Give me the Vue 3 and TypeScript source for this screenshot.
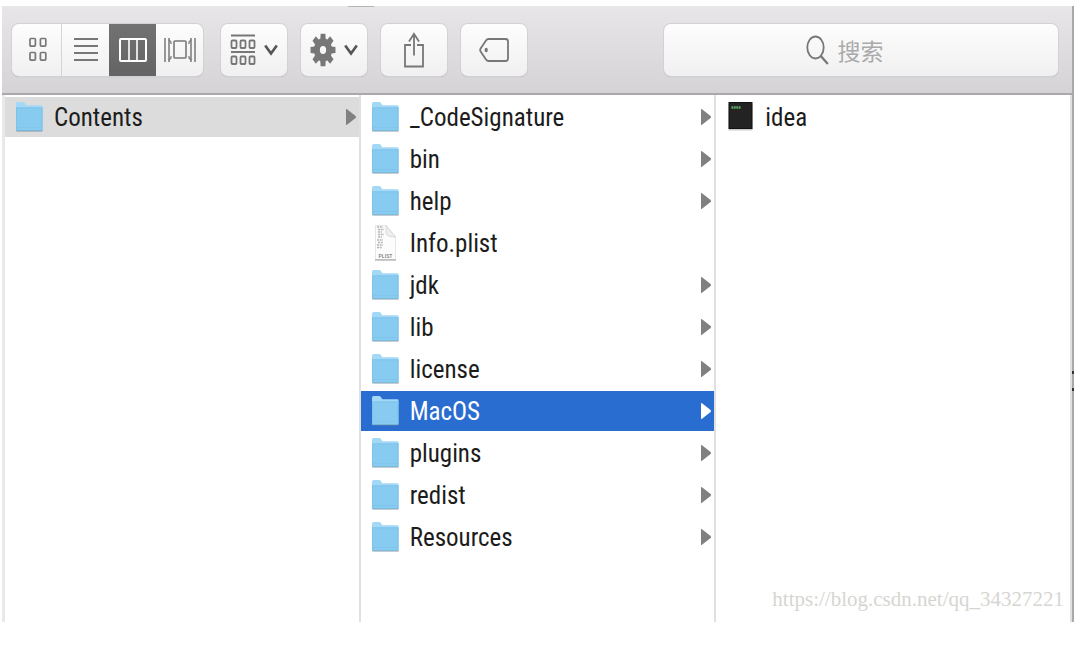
<script setup lang="ts">
import { ref } from 'vue'

type Kind = 'folder' | 'plist' | 'exec'

interface Entry {
  name: string
  kind: Kind
}

interface Column {
  label: string
  entries: Entry[]
  picked?: string
  active?: boolean
}

const folder = (name: string): Entry => ({ name, kind: 'folder' })

const columns = ref<Column[]>([
  { label: 'Application', entries: [folder('Contents')], picked: 'Contents' },
  {
    label: 'Contents',
    picked: 'MacOS',
    active: true,
    entries: [
      folder('_CodeSignature'),
      folder('bin'),
      folder('help'),
      { name: 'Info.plist', kind: 'plist' },
      folder('jdk'),
      folder('lib'),
      folder('license'),
      folder('MacOS'),
      folder('plugins'),
      folder('redist'),
      folder('Resources'),
    ],
  },
  { label: 'MacOS', entries: [{ name: 'idea', kind: 'exec' }] },
])

const query = ref('')
const teeth = [0, 45, 90, 135, 180, 225, 270, 315]
</script>

<template>
  <div class="page">
    <main class="window">
      <header class="toolbar">
        <div class="segments" role="group" aria-label="View">
          <button type="button" class="segment" aria-label="Icons">
            <svg width="18" height="26" viewBox="0 0 18 26" fill="none" stroke="#777" stroke-width="1.7">
              <rect x="1" y="1.5" width="5.4" height="7.6" rx="1" />
              <rect x="11.4" y="1.5" width="5.4" height="7.6" rx="1" />
              <rect x="1" y="15.5" width="5.4" height="7.6" rx="1" />
              <rect x="11.4" y="15.5" width="5.4" height="7.6" rx="1" />
            </svg>
          </button>
          <button type="button" class="segment" aria-label="List">
            <svg width="26" height="26" viewBox="0 0 26 26" stroke="#777" stroke-width="2">
              <path d="M1 2H25M1 9H25M1 16H25M1 23H25" />
            </svg>
          </button>
          <button type="button" class="segment on" aria-label="Columns" aria-pressed="true">
            <svg width="28" height="24" viewBox="0 0 28 24" fill="none" stroke="#fff" stroke-width="2">
              <rect x="1" y="1" width="26" height="22" rx="1" />
              <path d="M10 1V23M18 1V23" stroke-width="1.6" />
            </svg>
          </button>
          <button type="button" class="segment" aria-label="Cover Flow">
            <svg width="32" height="26" viewBox="0 0 32 26" fill="none" stroke="#777" stroke-width="1.6">
              <rect x="10" y="4" width="12" height="17" rx="1" />
              <path d="M1 1V25M31 1V25M5 1V25M27 1V25" stroke-width="1.5" />
              <path d="M5 3L7 5V7M7 19V21L5 23M27 3L25 5V7M25 19V21L27 23" stroke-width="1.2" />
            </svg>
          </button>
        </div>

        <button type="button" class="tool" aria-label="Arrange">
          <svg width="26" height="32" viewBox="0 0 26 32" fill="none" stroke="#777" stroke-width="1.8">
            <path d="M1 1.5H25M1 18H25" stroke-width="2" />
            <rect x="1.5" y="6.5" width="5" height="7.5" rx="1" />
            <rect x="10.5" y="6.5" width="5" height="7.5" rx="1" />
            <rect x="19.5" y="6.5" width="5" height="7.5" rx="1" />
            <rect x="1.5" y="22.5" width="5" height="7.5" rx="1" />
            <rect x="10.5" y="22.5" width="5" height="7.5" rx="1" />
            <rect x="19.5" y="22.5" width="5" height="7.5" rx="1" />
          </svg>
          <svg width="14" height="12" viewBox="0 0 14 12" fill="none" stroke="#555" stroke-width="2.6">
            <path d="M1.2 1.5L7 9.5L12.8 1.5" />
          </svg>
        </button>

        <button type="button" class="tool" aria-label="Actions">
          <svg width="26" height="34" viewBox="-12 -12 24 24" preserveAspectRatio="none">
            <path v-for="a in teeth" :key="a" d="M-2.2 -11.5H2.2L2.6 -6H-2.6Z" fill="#777" :transform="`rotate(${a})`" />
            <circle r="5.6" fill="none" stroke="#777" stroke-width="5.4" />
          </svg>
          <svg width="14" height="12" viewBox="0 0 14 12" fill="none" stroke="#555" stroke-width="2.6">
            <path d="M1.2 1.5L7 9.5L12.8 1.5" />
          </svg>
        </button>

        <button type="button" class="tool" aria-label="Share">
          <svg width="22" height="36" viewBox="0 0 22 36" fill="none" stroke="#777" stroke-width="1.8">
            <path d="M8 13H2V34.5H20V13H14" />
            <path d="M11 23.5V2M6 9.5L11 1.8L16 9.5" />
          </svg>
        </button>

        <button type="button" class="tool" aria-label="Tags">
          <svg width="30" height="24" viewBox="0 0 30 24" fill="none" stroke="#777" stroke-width="1.8">
            <path d="M9.5 1H26.5Q29 1 29 3.5V20.5Q29 23 26.5 23H9.5Q8 23 7 21.5L1.6 13.5Q.8 12 1.6 10.5L7 2.5Q8 1 9.5 1Z" />
            <ellipse cx="7.2" cy="12" rx="1.6" ry="2.2" fill="#777" stroke="none" />
          </svg>
        </button>

        <label class="search">
          <svg width="23" height="30" viewBox="0 0 23 30" fill="none" stroke="#777" stroke-width="1.8">
            <ellipse cx="9.5" cy="12.5" rx="8.2" ry="11" />
            <path d="M14.8 21L21.8 29" stroke-width="2.2" />
          </svg>
          <input v-model="query" type="text" placeholder="搜索" aria-label="搜索" />
        </label>
      </header>

      <div class="browser">
        <ul v-for="col in columns" :key="col.label" class="column" :aria-label="col.label">
          <li v-for="e in col.entries" :key="e.name">
            <button
              type="button"
              class="row"
              :class="{ picked: col.picked === e.name, active: col.active && col.picked === e.name }"
              @click="col.picked = e.name"
            >
              <svg v-if="e.kind === 'folder'" width="28" height="36" viewBox="0 0 28 36">
                <path d="M.5 31H26.500V33H.5Z" fill="#71818b" opacity=".4" />
                <path d="M0 5Q0 3 1.500 3H7.500Q8.500 3 9.200 4.600L10.200 6.300H25.500Q26.500 6.300 26.500 7.500V12H0Z" fill="#a3d8f7" />
                <path d="M0 8.500H26.500V30.500Q26.500 31.800 25.500 31.800H1Q0 31.800 0 30.500Z" fill="#88cbf1" />
                <path d="M0 8.800H26.500" stroke="#7cc0e8" stroke-width=".8" />
                <path d="M.4 9V31M26.100 9V31" stroke="#7bbfe6" stroke-width=".8" />
                <path d="M0 28.500H26.500" stroke="#7dc3ea" stroke-width=".7" />
                <path d="M0 31.500H26.500" stroke="#74b4d9" stroke-width=".8" />
              </svg>
              <svg v-else-if="e.kind === 'plist'" width="28" height="36" viewBox="0 0 28 36">
                <path d="M3.500 .5H14L23.500 12V34.5H3.500Z" fill="#fcfcfc" stroke="#e6e6e6" />
                <path d="M14 .5V8Q15 12 23.500 12Z" fill="#eee" stroke="#ccc" stroke-width=".7" />
                <path d="M3 35H24" stroke="#999" />
                <path
                  d="M5 2H11M6 4.500H12M6 7H10M6 9.500H12M6 12H10M5 15H11M6 17.500H11M5 20H11M5 22.500H10"
                  stroke="#b5b5b5"
                  stroke-width="1.3"
                  stroke-dasharray="2 .7"
                />
                <text x="13.500" y="32.500" text-anchor="middle" font-size="6" fill="#666">PLIST</text>
              </svg>
              <svg v-else width="28" height="36" viewBox="0 0 28 36">
                <rect x="1.500" y="5" width="24" height="26.500" rx=".5" fill="#999" opacity=".5" />
                <rect x="1.500" y="3" width="24" height="27" fill="#111" />
                <rect x="2.500" y="4" width="22" height="25" fill="#232323" />
                <path d="M4.500 8.500H14" stroke="#5cae62" stroke-width="2.4" stroke-dasharray="1.800 .6" />
              </svg>
              <span class="name">{{ e.name }}</span>
              <svg v-if="e.kind === 'folder'" class="arrow" width="12" height="18" viewBox="0 0 12 18">
                <path d="M1 1.500Q1 .5 2 1.300L10.600 8Q11.600 9 10.600 10L2 16.700Q1 17.500 1 16.500Z" fill="currentColor" />
              </svg>
            </button>
          </li>
        </ul>
      </div>
      <a class="credit" href="#">https://blog.csdn.net/qq_34327221</a>
    </main>
  </div>
</template>

<style>
body {
  margin: 0;
  background: #fff;
}
</style>

<style scoped>
.page {
  box-sizing: border-box;
  min-height: 100vh;
  padding: 6px 12px 48px 2px;
  display: flex;
  font-family: 'Liberation Sans Narrow', 'Roboto Condensed', Roboto, 'Noto Sans CJK SC', sans-serif;
}

.window {
  position: relative;
  flex: 1;
  display: flex;
  flex-direction: column;
  border-right: 2px solid #a9a9ab;
}

/* Sliver of the title bar's proxy icon above the toolbar */
.window::before {
  content: '';
  position: absolute;
  left: 346px;
  top: 0;
  width: 26px;
  height: 1px;
  background: #b5b5b5;
}

/* Marks of the page behind, showing along the right edge */
.window::after {
  content: '';
  position: absolute;
  right: -2px;
  top: 365px;
  width: 2px;
  height: 20px;
  background: linear-gradient(#333 3px, transparent 3px 17px, #333 17px);
}

.toolbar {
  box-sizing: border-box;
  height: 89px;
  padding: 18px 14px 15px 10px;
  display: flex;
  align-items: flex-start;
  gap: 14px;
  background: linear-gradient(#e8e6e9, #d5d3d6);
  border-bottom: 2px solid #aaa8ab;
}

button {
  font: inherit;
  margin: 0;
  padding: 0;
  border: 0;
  color: inherit;
}

.segments,
.tool,
.search {
  height: 52px;
  border-radius: 7px;
  background: linear-gradient(#fdfdfd, #f0f0f0);
  box-shadow: 0 0 0 1px #d3d1d4, 0 1px 1px 0 #a3a1a4;
}

.segments {
  display: flex;
  margin-right: 4px;
  overflow: hidden;
}

.segment {
  width: 47px;
  display: flex;
  align-items: center;
  justify-content: center;
  background: none;
}

.segment:first-child {
  width: 50px;
  padding-left: 2px;
  border-right: 1px solid #d5d5d5;
}

.segment.on {
  background: linear-gradient(#727272, #646464);
}

.tool {
  width: 66px;
  display: flex;
  align-items: center;
  justify-content: center;
  gap: 8px;
}

.search {
  flex: 1;
  margin-left: 123px;
  display: grid;
  grid-template-columns: 42% 1fr;
  column-gap: 8px;
  align-items: center;
}

.search svg {
  justify-self: end;
}

.search input {
  min-width: 0;
  padding: 0;
  border: 0;
  outline: 0;
  background: none;
  font-family: 'Noto Sans CJK SC', sans-serif;
  font-size: 23px;
  color: #333;
}

.search input::placeholder {
  color: #aaa;
  opacity: 1;
}

.browser {
  flex: 1;
  display: grid;
  grid-template-columns: repeat(3, 1fr);
  border-left: 3px solid #e9e9e9;
}

.column {
  margin: 0;
  padding: 2px 0;
  list-style: none;
  display: flex;
  flex-direction: column;
  gap: 2px;
  border-right: 2px solid #e0e0e0;
}

.row {
  box-sizing: border-box;
  width: 100%;
  height: 40px;
  padding: 0 2px 0 11px;
  display: flex;
  align-items: center;
  gap: 10px;
  background: none;
  color: #1c1c1c;
  font-size: 25px;
  line-height: 38px;
  text-align: left;
}

.name {
  flex: 1;
  padding-top: 2px;
}

.arrow {
  color: #808080;
}

.picked {
  background: #dcdcdc;
}

.active {
  background: #2a6dd1;
  color: #fff;
}

.active .arrow {
  color: #fff;
}

.credit {
  position: absolute;
  right: 8px;
  bottom: 10px;
  font-family: 'Liberation Serif', serif;
  font-size: 21px;
  line-height: 26px;
  color: #d6d6d1;
  text-decoration: none;
}
</style>
